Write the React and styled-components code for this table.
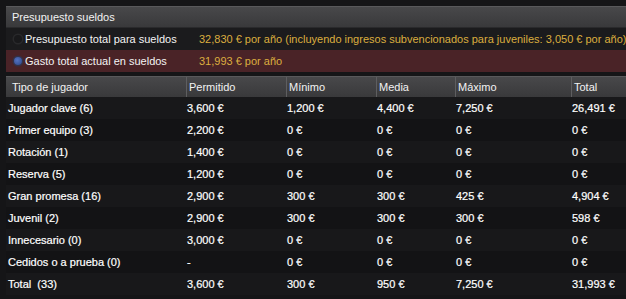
import styled, { createGlobalStyle } from "styled-components";

const GlobalStyle = createGlobalStyle`
  html, body {
    margin: 0;
    padding: 0;
    background: #151517;
  }
  body {
    font-family: "Liberation Sans", Arial, sans-serif;
    font-size: 11px;
    color: #fff;
  }
`;

const rows = [
  ["Jugador clave (6)", "3,600 €", "1,200 €", "4,400 €", "7,250 €", "26,491 €"],
  ["Primer equipo (3)", "2,200 €", "0 €", "0 €", "0 €", "0 €"],
  ["Rotación (1)", "1,400 €", "0 €", "0 €", "0 €", "0 €"],
  ["Reserva (5)", "1,200 €", "0 €", "0 €", "0 €", "0 €"],
  ["Gran promesa (16)", "2,900 €", "300 €", "300 €", "425 €", "4,904 €"],
  ["Juvenil (2)", "2,900 €", "300 €", "300 €", "300 €", "598 €"],
  ["Innecesario (0)", "3,000 €", "0 €", "0 €", "0 €", "0 €"],
  ["Cedidos o a prueba (0)", "-", "0 €", "0 €", "0 €", "0 €"],
  ["Total\u00a0 (33)", "3,600 €", "300 €", "950 €", "7,250 €", "31,993 €"],
];

const columns = ["Tipo de jugador", "Permitido", "Mínimo", "Media", "Máximo", "Total"];

const COLS = "180px 100px 90px 79px 116px 55px";

const Page = styled.div`
  padding: 6px 0 0 6px;
  width: 620px;
`;

const Bar = styled.div`
  height: 22px;
  display: flex;
  align-items: center;
  padding-left: 6px;
  box-sizing: border-box;
  background: linear-gradient(#48484a, #39393b);
  border-top: 1px solid #59595b;
  border-bottom: 1px solid #2a2a2c;
  color: #f2f2f2;
`;

const InfoRow = styled.div`
  height: 22px;
  display: grid;
  grid-template-columns: 19px 174px 1fr;
  align-items: center;
  background: ${(p) => (p.$alert ? "#4a2327" : "#1b1b1d")};
  white-space: nowrap;
`;

const Dot = styled.span`
  justify-self: center;
  width: 8px;
  height: 8px;
  border-radius: 50%;
  margin-left: 4px;
  background: ${(p) =>
    p.$on ? "radial-gradient(circle at 40% 40%, #5473c0, #2a4588)" : "#19191b"};
  box-shadow: ${(p) =>
    p.$on ? "0 0 0 1.5px #323248" : "0 0 0 1.5px #29292b"};
`;

const Label = styled.span`
  color: #f4f4f4;
`;

const Value = styled.span`
  color: #dcae3f;
`;

const Table = styled.div`
  margin-top: 4px;
`;

const HeadRow = styled.div`
  display: grid;
  grid-template-columns: ${COLS};
  height: 21px;
  background: linear-gradient(#48484a, #39393b);
  border-top: 1px solid #59595b;
  box-sizing: border-box;
`;

const HeadCell = styled.div`
  display: flex;
  align-items: center;
  padding-left: ${(p) => (p.$first ? 6 : 2)}px;
  border-left: ${(p) => (p.$first ? "none" : "1px solid #5e5e60")};
  color: #f2f2f2;
  white-space: nowrap;
`;

const BodyRow = styled.div`
  display: grid;
  grid-template-columns: ${COLS};
  height: 22px;
  align-items: center;
  background: ${(p) => (p.$odd ? "#18181a" : "#131315")};
`;

const Cell = styled.div`
  padding-left: ${(p) => (p.$first ? 2 : 1)}px;
  color: #fff;
  white-space: nowrap;
  -webkit-text-stroke: 0.2px #fff;
`;

export default function App() {
  return (
    <Page>
      <GlobalStyle />
      <Bar>Presupuesto sueldos</Bar>
      <InfoRow>
        <Dot />
        <Label>Presupuesto total para sueldos</Label>
        <Value>
          32,830 € por año (incluyendo ingresos subvencionados para juveniles: 3,050 € por año)
        </Value>
      </InfoRow>
      <InfoRow $alert>
        <Dot $on />
        <Label>Gasto total actual en sueldos</Label>
        <Value>31,993 € por año</Value>
      </InfoRow>
      <Table>
        <HeadRow>
          {columns.map((c, i) => (
            <HeadCell key={c} $first={i === 0}>
              {c}
            </HeadCell>
          ))}
        </HeadRow>
        {rows.map((r, i) => (
          <BodyRow key={r[0]} $odd={i % 2 === 0}>
            {r.map((v, j) => (
              <Cell key={j} $first={j === 0}>
                {v}
              </Cell>
            ))}
          </BodyRow>
        ))}
      </Table>
    </Page>
  );
}
